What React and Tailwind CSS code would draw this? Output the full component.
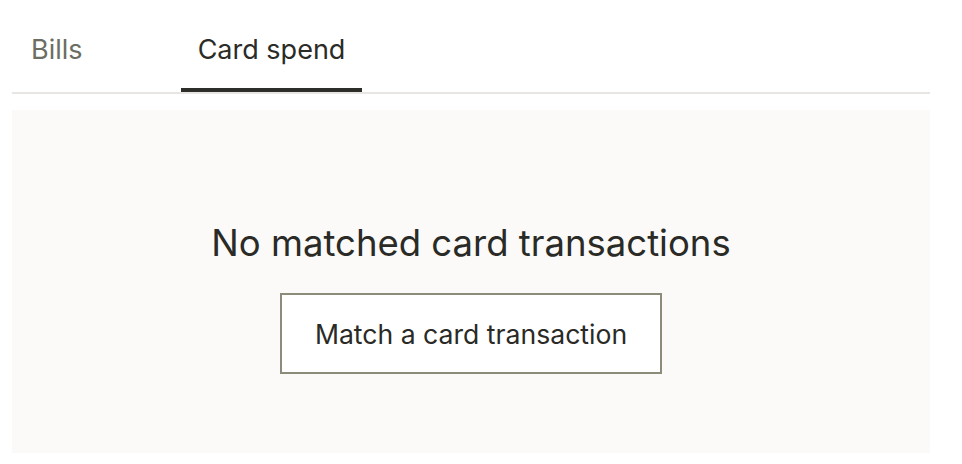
export default function App() {
  return (
    <div className="min-h-screen bg-white" style={{ fontFamily: 'Inter, "Noto Sans", sans-serif' }}>
      <div className="ml-3 w-[918px]">
        {/* Tabs */}
        <div className="flex border-b-2 border-[#e9e5e2]">
          <button className="ml-[3px] w-[166px] px-4 pt-[34px] pb-[22px] text-left text-[27px] leading-8 text-[#6c6d63] border-b-4 border-transparent">
            Bills
          </button>
          <button className="w-[181px] px-4 pt-[34px] pb-[22px] text-center text-[27px] leading-8 text-[#2b2b27] border-b-4 border-[#2d2d29]">
            Card spend
          </button>
        </div>

        {/* Empty state */}
        <div className="mt-4 flex flex-col items-center bg-[#fbfaf8] pt-[111px] pb-[79px]">
          <h2 className="text-[36.5px] leading-[44px] text-[#2a2a26]">
            No matched card transactions
          </h2>
          <button className="mt-[28px] border-2 border-[#8d8c7a] bg-white px-[33px] py-[22.5px] text-[26.6px] leading-8 text-[#2a2a26]">
            Match a card transaction
          </button>
        </div>
      </div>
    </div>
  );
}
